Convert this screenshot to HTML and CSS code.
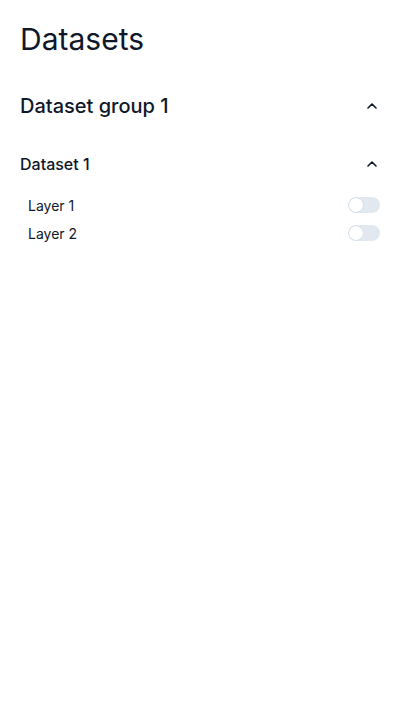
FILE: index.html
```html
<!DOCTYPE html>
<html>
<head>
<meta charset="utf-8">
<link rel="stylesheet" href="styles.css">
</head>
<body>
<main class="panel">
  <h1 class="title">Datasets</h1>
  <section class="group">
    <div class="group-head">
      <h2 class="group-title">Dataset group 1</h2>
      <svg class="chev" viewBox="0 0 16 16" width="16" height="16"><path d="M4 10l4-4 4 4" fill="none" stroke="currentColor" stroke-width="1.6" stroke-linecap="round" stroke-linejoin="round"/></svg>
    </div>
    <div class="dataset">
      <div class="dataset-head">
        <h3 class="dataset-title">Dataset 1</h3>
        <svg class="chev" viewBox="0 0 16 16" width="16" height="16"><path d="M4 10l4-4 4 4" fill="none" stroke="currentColor" stroke-width="1.6" stroke-linecap="round" stroke-linejoin="round"/></svg>
      </div>
      <ul class="layers">
        <li class="layer"><span>Layer 1</span><span class="toggle"><span class="knob"></span></span></li>
        <li class="layer"><span>Layer 2</span><span class="toggle"><span class="knob"></span></span></li>
      </ul>
    </div>
  </section>
</main>
</body>
</html>
```
FILE: styles.css
```css
* { box-sizing: border-box; }
body {
  margin: 0;
  background: #fff;
  font-family: Inter, "Noto Sans", sans-serif;
  color: #0f172a;
}
.panel {
  padding: 21px 20px 20px;
}
.title {
  margin: 0;
  font-size: 30px;
  line-height: 36px;
  font-weight: 400;
}
.group {
  margin-top: 35px;
}
.group-head, .dataset-head {
  display: flex;
  align-items: center;
  justify-content: space-between;
}
.group-title {
  margin: 0;
  font-size: 20px;
  line-height: 28px;
  font-weight: 500;
}
.chev {
  color: #0f172a;
}
.dataset {
  margin-top: 32px;
}
.dataset-title {
  margin: 0;
  font-size: 16px;
  line-height: 24px;
  font-weight: 500;
}
.layers {
  list-style: none;
  margin: 15px 0 0;
  padding: 0 0 0 8px;
}
.layer {
  display: flex;
  align-items: center;
  justify-content: space-between;
  height: 28px;
  font-size: 14px;
}
.toggle {
  width: 32px;
  height: 16px;
  border-radius: 8px;
  background: #e2e8f0;
  display: flex;
  align-items: center;
  padding: 1px;
}
.knob {
  width: 14px;
  height: 14px;
  border-radius: 50%;
  background: #fff;
  box-shadow: 0 0 0 0.5px #cbd5e1;
}
```
